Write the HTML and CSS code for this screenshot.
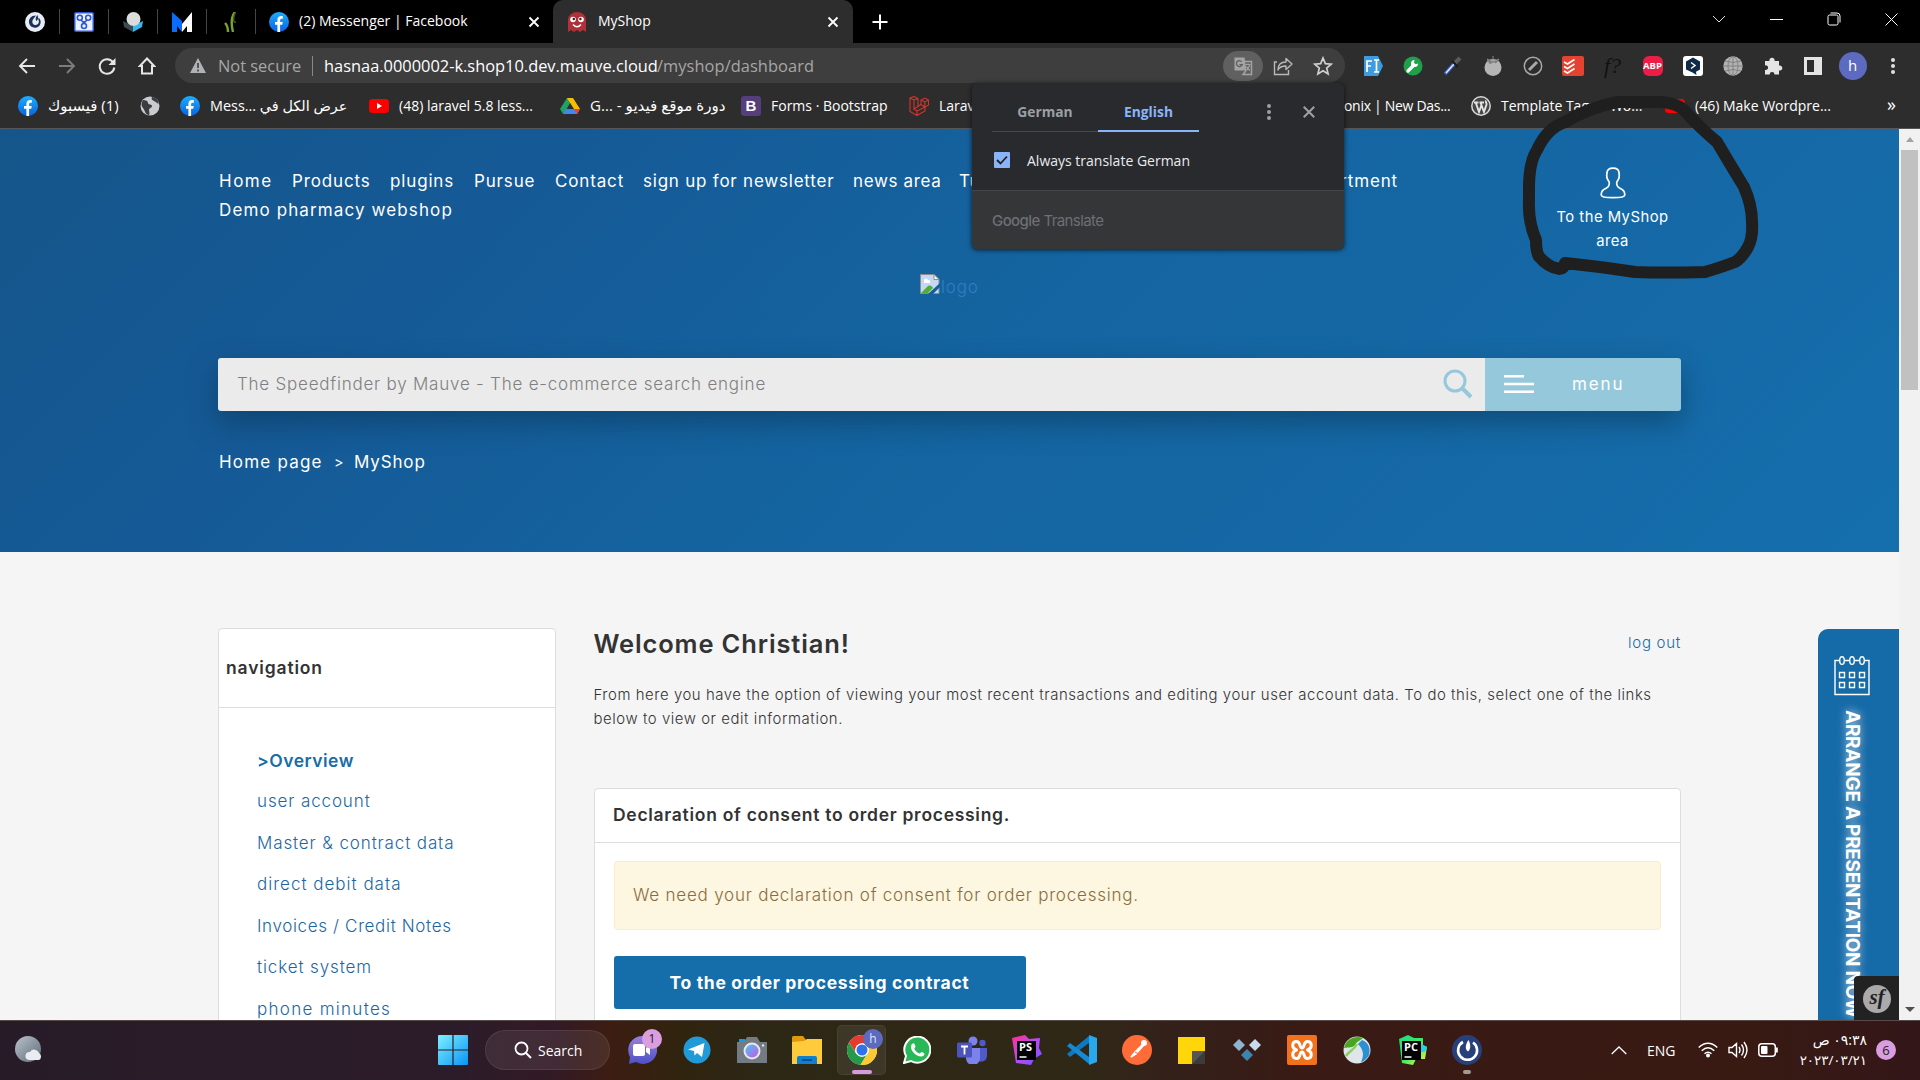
FILE: index.html
```html
<!DOCTYPE html>
<html lang="en">
<head>
<meta charset="utf-8">
<title>MyShop</title>
<link rel="stylesheet" href="styles.css">
</head>
<body>
<svg class="defs" aria-hidden="true">
  <defs>
    <linearGradient id="fbg" x1="0" y1="0" x2="0" y2="1"><stop offset="0" stop-color="#1aafff"/><stop offset="1" stop-color="#0a62e0"/></linearGradient>
    <linearGradient id="wing" x1="0" y1="0" x2="1" y2="1"><stop offset="0" stop-color="#7df0ff"/><stop offset="1" stop-color="#0a94f5"/></linearGradient>
    <linearGradient id="chatg" x1="0" y1="0" x2="0" y2="1"><stop offset="0" stop-color="#9a82d8"/><stop offset="1" stop-color="#4d50c8"/></linearGradient>
    <linearGradient id="psg" x1="0" y1="0" x2="1" y2="1"><stop offset="0" stop-color="#ff318c"/><stop offset=".5" stop-color="#b74af7"/><stop offset="1" stop-color="#6b57ff"/></linearGradient>
    <linearGradient id="pcg" x1="0" y1="0" x2="1" y2="1"><stop offset="0" stop-color="#21d789"/><stop offset=".5" stop-color="#3bea62"/><stop offset="1" stop-color="#fcf84a"/></linearGradient>
    <linearGradient id="lensg" x1="0" y1="0" x2="1" y2="1"><stop offset="0" stop-color="#4fc3f7"/><stop offset="1" stop-color="#c45be0"/></linearGradient>
    <linearGradient id="moong" x1="0" y1="0" x2="1" y2="1"><stop offset="0" stop-color="#b7c2cc"/><stop offset="1" stop-color="#5f6b76"/></linearGradient>
    <symbol id="fb" viewBox="0 0 20 20"><circle cx="10" cy="10" r="10" fill="url(#fbg)"/><path d="M8.4 20v-7.2H6V10h2.4V8c0-2.6 1.5-3.9 3.7-3.9.9 0 1.7.1 1.7.1v2.5h-1.2c-1.100 0-1.500.7-1.500 1.500V10h2.600l-.4 2.800h-2.200V20z" fill="#fff"/></symbol>
    <symbol id="yt" viewBox="0 0 20 20"><rect y="3" width="20" height="14" rx="3.500" fill="#f00"/><path d="M8 7l5 3-5 3z" fill="#fff"/></symbol>
    <symbol id="x" viewBox="0 0 12 12"><path d="M1.500 1.500l9 9m0-9l-9 9" stroke="currentColor" stroke-width="1.800" fill="none"/></symbol>
    <symbol id="dots" viewBox="0 0 6 18"><g fill="currentColor"><circle cx="3" cy="3" r="2"/><circle cx="3" cy="9" r="2"/><circle cx="3" cy="15" r="2"/></g></symbol>
  </defs>
</svg>

<div class="browser">
  <header class="tabstrip">
    <div class="pins">
      <span class="pin"><svg width="20" height="20" viewBox="0 0 20 20"><circle cx="10" cy="10" r="10" fill="#e8ecf4"/><path d="M11 3.500C6 3.500 3.600 7 4 10.800c.5 3.400 3.500 5.200 6.500 4.900 3.700-.3 5.700-3.700 5-7-.3-1.500-1-2.500-2-3.300l-.2 2c.9 1.600.8 3.600-.6 4.800-1.400 1.100-3.700 1-4.800-.5-1.200-1.700-.5-3.800.8-5.200z" fill="#1d3058"/><path d="M12.400 3c.9 2 1 4.500-.8 6-1.700-1.400-.8-4.400.8-6z" fill="#1d3058"/></svg></span>
      <span class="pin"><svg width="20" height="20" viewBox="0 0 20 20"><rect width="20" height="20" rx="2" fill="#2d57d6"/><rect x="1.500" y="1.500" width="17" height="17" fill="#edf2ff"/><g fill="none" stroke="#2d57d6" stroke-width="1.600"><circle cx="5.800" cy="5.800" r="2.500"/><circle cx="14.200" cy="5.800" r="2.500"/><circle cx="10" cy="14" r="2.500"/><path d="M7 8l3 3 3-3M10 9v3"/></g></svg></span>
      <span class="pin"><svg width="20" height="20" viewBox="0 0 20 20"><path d="M0 9l10 5v6L1 15z" fill="#3a4a50"/><path d="M10 14l10-5-1 6-9 5z" fill="#38b6f0"/><circle cx="10.500" cy="7" r="7" fill="#dcdcdc"/></svg></span>
      <span class="pin"><svg width="20" height="20" viewBox="0 0 20 20"><path d="M0 0l10 9v11L5 14v6H0z" fill="#0a6cff"/><path d="M20 0L10 12v8l5-6v6h5z" fill="#fff"/></svg></span>
      <span class="pin"><svg width="20" height="20" viewBox="0 0 20 20"><path d="M14 0c-4 5-4 12-2 20M7 20c0-5-1-7-3-9" stroke="#7da32c" stroke-width="2.400" fill="none"/><path d="M14 1c-2 6-2 10 1 9" stroke="#3f5d1c" stroke-width="1.500" fill="none"/></svg></span>
    </div>
    <div class="tab">
      <svg class="fav" width="20" height="20"><use href="#fb"/></svg><span>(2) Messenger | Facebook</span><svg class="close" width="12" height="12"><use href="#x"/></svg>
    </div>
    <div class="tab active">
      <svg class="fav" width="20" height="20" viewBox="0 0 20 20"><path d="M1 8a9 8 0 0 1 18 0v12l-3-2-3 2-3-2-3 2-3-2-3 2z" fill="#b03238"/><g fill="#fff"><circle cx="6" cy="7.500" r="2.800"/><circle cx="14" cy="7.500" r="2.800"/></g><g fill="#222"><circle cx="6.800" cy="7" r="1.200"/><circle cx="13.400" cy="7" r="1.200"/></g><path d="M6 12.500q4 4.500 8 0" stroke="#fff" stroke-width="1.500" fill="none"/></svg><span>MyShop</span><svg class="close" width="12" height="12"><use href="#x"/></svg>
    </div>
    <svg class="plus" width="16" height="16" viewBox="0 0 16 16"><path d="M8 .5v15M.5 8h15" stroke="#fff" stroke-width="2"/></svg>
    <div class="winctl">
      <svg width="14" height="8" viewBox="0 0 14 8"><path d="M1 1l6 6 6-6" stroke="#ddd" fill="none"/></svg>
      <svg width="13" height="8" viewBox="0 0 13 8"><path d="M0 4.500h13" stroke="#fff"/></svg>
      <svg width="14" height="14" viewBox="0 0 14 14"><rect x="1" y="3" width="10" height="10" rx="1.500" fill="none" stroke="#fff"/><path d="M3.500 1h6.500a3 3 0 0 1 3 3v6.500" fill="none" stroke="#fff"/></svg>
      <svg width="13" height="13" viewBox="0 0 13 13"><path d="M.5.5l12 12m0-12l-12 12" stroke="#fff"/></svg>
    </div>
  </header>

  <div class="toolbar">
    <div class="navbtns">
      <svg width="18" height="18" viewBox="0 0 18 18"><path d="M17 9H2m7-7L2 9l7 7" stroke="#e6e6e6" stroke-width="1.900" fill="none"/></svg>
      <svg width="18" height="18" viewBox="0 0 18 18"><path d="M1 9h15M9 2l7 7-7 7" stroke="#7c7c7c" stroke-width="1.900" fill="none"/></svg>
      <svg width="18" height="18" viewBox="0 0 18 18"><path d="M15 5.200A7.300 7.300 0 1 0 16.300 10.500" stroke="#e6e6e6" stroke-width="2" fill="none"/><path d="M17.500 1v7h-7z" fill="#e6e6e6"/></svg>
      <svg width="18" height="18" viewBox="0 0 18 18"><path d="M9 1.500L1.800 9H4v7.500h10V9h2.200z" stroke="#e6e6e6" stroke-width="2" fill="none"/></svg>
    </div>
    <div class="omnibox">
      <svg width="16" height="15" viewBox="0 0 16 15"><path d="M8 0l8 15H0z" fill="#b0b3b6"/><path d="M8 5v5m0 1.500v2" stroke="#3e3e3e" stroke-width="1.600"/></svg>
      <span class="dim notsecure">Not secure</span><i class="bar"></i><span class="host">hasnaa.0000002-k.shop10.dev.mauve.cloud</span><span class="dim path">/myshop/dashboard</span>
      <div class="omniact">
        <span class="pill"><svg width="20" height="20" viewBox="0 0 20 20"><path d="M1.500 1.500h10l2 13h-12z" fill="#a3a3a3"/><path d="M12 5.500h6.500v13H10l3-4" fill="none" stroke="#a3a3a3" stroke-width="1.500"/><path d="M8.800 5.700a3 3 0 1 0 .4 3H6.500" stroke="#606060" fill="none" stroke-width="1.300"/><path d="M12.500 8.500h5M15 7.500v1m1.700 0c-.4 2.500-1.700 4.500-3.200 6m0-4c.8 2 2 3.200 3.500 4" stroke="#a3a3a3" stroke-width="1.200" fill="none"/></svg></span>
        <svg width="20" height="20" viewBox="0 0 20 20"><path d="M4 6H1.500v12.500h14V14" stroke="#b8b8b8" stroke-width="1.400" fill="none"/><path d="M5 14c0-5 3-8 8-8V2.500L19 8l-6 5.500V10c-4 0-6.500 1-8 4z" stroke="#b8b8b8" stroke-width="1.400" fill="none" stroke-linejoin="round"/></svg>
        <svg width="20" height="20" viewBox="0 0 20 20"><path d="M10 2l2.300 5.600 6 .5-4.600 3.900 1.400 5.900L10 14.800l-5.100 3.100L6.300 12 1.700 8.100l6-.5z" stroke="#d0d0d0" stroke-width="1.700" fill="none"/></svg>
      </div>
    </div>
    <div class="exts">
      <svg width="20" height="20" viewBox="0 0 20 20"><path d="M1 0h14l5 10-5 10H1z" fill="#3f9be0"/><path d="M4 16V5h5M4 10h4M11 4h5m-2.500 0v12M11 16h5" stroke="#fff" stroke-width="1.700" fill="none"/></svg>
      <svg width="20" height="20" viewBox="0 0 20 20"><circle cx="10" cy="10" r="9.500" fill="#1fa14b"/><path d="M5 15l6-6" stroke="#fff" stroke-width="3.200" stroke-linecap="round"/><path d="M15 7.500a3.500 3.500 0 1 1-3.500-3.500l-.5 3 1.500 1.200z" fill="#fff"/></svg>
      <svg width="20" height="20" viewBox="0 0 20 20"><path d="M2 18l9-10" stroke="#3b62d8" stroke-width="3.500"/><path d="M3 17l8-9" stroke="#dfe6ff" stroke-width="1.500"/><path d="M12 7l5-5" stroke="#5a5a5a" stroke-width="4"/><path d="M9 5l6 6" stroke="#1a1a1a" stroke-width="2"/></svg>
      <svg width="20" height="20" viewBox="0 0 20 20"><circle cx="10" cy="11.500" r="8.500" fill="#b5b5b5"/><path d="M10 0v6M4 3l6 3 6-3-3 4-3-1-3 2z" fill="#777" stroke="#8a8a8a"/></svg>
      <svg width="20" height="20" viewBox="0 0 20 20"><circle cx="10" cy="10" r="8.700" fill="none" stroke="#a8a8a8" stroke-width="1.500"/><path d="M6 14l8-8" stroke="#a8a8a8" stroke-width="3"/></svg>
      <svg width="22" height="20" viewBox="0 0 22 20"><rect width="22" height="20" rx="2" fill="#e44332"/><path d="M2 6l3.500 2 7-4.500M2 10.500l3.500 2 7-4.500M2 15l3.500 2 7-4.500" stroke="#fff" stroke-width="1.600" fill="none"/></svg>
      <span class="fq">f?</span>
      <span class="abp">ABP</span>
      <svg width="20" height="20" viewBox="0 0 20 20"><rect width="20" height="20" rx="3" fill="#fff"/><path d="M10 1.500l7 4v8l-4 2.300.5 3.200-4-2.500L3 13.500v-8z" fill="#0f2b46"/><path d="M8 6.500l4 3-4 3" stroke="#fff" stroke-width="1.500" fill="none"/></svg>
      <svg width="20" height="20" viewBox="0 0 20 20"><circle cx="10" cy="10" r="9.700" fill="#b2b2b2"/><path d="M10 0v20M0 10h20M2 5q8 3 16 0M2 15q8-3 16 0" stroke="#777" stroke-width=".8" fill="none"/><ellipse cx="10" cy="10" rx="5" ry="9.500" stroke="#777" stroke-width=".8" fill="none"/></svg>
      <svg width="20" height="20" viewBox="0 0 20 20"><path d="M2 5h4.500a2.600 2.600 0 1 1 5 0H16v4.500a2.600 2.600 0 1 1 0 5V18.500h-4.500a2.400 2.400 0 1 0-4.800 0H2V14a2.400 2.400 0 1 0 0-4.600z" fill="#e4e4e4"/></svg>
      <svg width="18" height="18" viewBox="0 0 18 18"><path d="M0 0h18v18H0zM3 3v12h7V3z" fill="#e4e4e4" fill-rule="evenodd"/></svg>
      <span class="avatar">h</span>
      <svg class="kebab" width="6" height="18"><use href="#dots"/></svg>
    </div>
  </div>

  <nav class="bookmarks">
    <a class="bk-fb"><svg width="20" height="20"><use href="#fb"/></svg><span class="ar" dir="rtl">(1) فيسبوك</span></a>
    <a class="bk-globe"><svg width="20" height="20" viewBox="0 0 20 20"><circle cx="10" cy="10" r="9.500" fill="#c9cccf"/><path d="M3 4c3 0 5 1 5 3s4 1 4 3-3 2-3 4 1 3 0 5c-4 0-4-5-6-7s-2-5 0-8zM12 1c-1 2 0 3 2 4s3 2 4.500 3C19 5 16 1 12 1z" fill="#3a3d40"/></svg></a>
    <a class="bk-mess"><svg width="20" height="20"><use href="#fb"/></svg><span class="ar2">Mess... عرض الكل في</span></a>
    <a class="bk-laravel"><svg width="20" height="20"><use href="#yt"/></svg><span>(48) laravel 5.8 less...</span></a>
    <a class="bk-drive"><svg width="20" height="20" viewBox="0 0 20 20"><path d="M7 2h6L6 14l-3 4-3-5z" fill="#1ea362"/><path d="M7 2h6l7 11h-6z" fill="#fbbc04"/><path d="M6 13h14l-3 5H3z" fill="#4285f4"/><path d="M14 13h6l-3 5z" fill="#ea4335"/></svg><span class="ar3">G... - دورة موقع فيديو</span></a>
    <a class="bk-boot"><span class="bs">B</span><span>Forms · Bootstrap</span></a>
    <a class="bk-lara"><svg width="20" height="20" viewBox="0 0 20 20"><path d="M1 2l4-1.500L9 2.500v8l3-2V4l4-2 3.500 2v5l-3.500 2v4l-8 4.500-7-4zM1 2l4 2v9l4-2.500M5 4l4-1.500M12 4l3.800 2L19.500 4M15.800 6v5L12 8.500M8 19.500V15l8-4M5 13l3 2" stroke="#d8342b" fill="none" stroke-width="1.100"/></svg><span>Laravel</span></a>
    <a class="bk-onix"><span>onix | New Das...</span></a>
    <a class="bk-wp"><svg width="20" height="20" viewBox="0 0 20 20"><circle cx="10" cy="10" r="9.200" fill="#464646" stroke="#d8d8d8" stroke-width="1.500"/><path d="M3 6.500h4.500M8.500 6.500H13M4.700 6.500L8 16l2.300-6.500M9.500 6.500L13 16l2.500-7.500c.5-2-1.500-2.500-.5-4" stroke="#e4e4e4" stroke-width="1.900" fill="none"/></svg><span>Template Tags – Wo...</span></a>
    <a class="bk-yt2"><svg width="20" height="20"><use href="#yt"/></svg><span>(46) Make Wordpre...</span></a>
    <span class="more">»</span>
  </nav>

  <div class="viewport">
    <div class="page">
      <section class="hero">
        <div class="hero-top">
          <nav class="mainnav">
            <a class="w-home">Home</a><a class="w-prod">Products</a><a class="w-plug">plugins</a><a class="w-purs">Pursue</a><a class="w-cont">Contact</a><a class="w-sign">sign up for newsletter</a><a class="w-news">news area</a><a class="w-tut">Tutorials</a><a class="w-dep">Department</a><a class="w-demo">Demo pharmacy webshop</a>
          </nav>
          <a class="account">
            <svg width="26" height="32" viewBox="0 0 26 32"><path d="M13 1.200c-4 0-6 1.600-6 4.800-.8 3 .2 6.500 2.200 9 .5 3.200-.2 4.600-2.700 6C3 22.700 1.200 24 1.200 28c0 1.800 4 2.700 11.800 2.700s11.800-.9 11.800-2.700c0-4-1.800-5.300-5.300-7-2.500-1.400-3.200-2.800-2.700-6 2-2.500 3-6 2.200-9 0-3.200-2-4.800-6-4.800z" fill="none" stroke="#fff" stroke-width="1.700"/></svg>
            <span>To the MyShop<br>area</span>
          </a>
        </div>
        <div class="logo"><svg width="20" height="20" viewBox="0 0 20 20"><path d="M.5.500h13.500l5 5v14H.5z" fill="#c4d8f5" stroke="#8d8d8d"/><path d="M14 .500v5h5z" fill="#fff" stroke="#8d8d8d"/><path d="M4 7a2 2 0 0 1 4-1 2 2 0 0 1 2 3H4z" fill="#fff"/><path d="M1 19l7-7c2-1 4 0 5 2l-5 5z" fill="#4fae33"/><path d="M8 20L20 9v4l-7 7z" fill="#155c98"/></svg><span>logo</span></div>
        <div class="search">
          <div class="field"><span>The Speedfinder by Mauve - The e-commerce search engine</span>
            <svg width="30" height="30" viewBox="0 0 30 30"><circle cx="12" cy="12" r="10" fill="none" stroke="#96c8db" stroke-width="3"/><path d="M19 19l9 9" stroke="#96c8db" stroke-width="4"/></svg></div>
          <div class="menu"><svg width="30" height="18" viewBox="0 0 30 18"><path d="M0 1.200h20M0 9h30M0 16.700h30" stroke="#fff" stroke-width="2.400"/></svg><span>menu</span></div>
        </div>
        <div class="crumbs"><span class="c1">Home page</span><span class="c2">&gt;</span><span class="c3">MyShop</span></div>
      </section>
      <main class="content">
        <aside class="sidenav">
          <h3>navigation</h3>
          <ul>
            <li class="current">&gt;Overview</li><li>user account</li><li>Master &amp; contract data</li><li class="n-debit">direct debit data</li><li class="n-inv">Invoices / Credit Notes</li><li>ticket system</li><li class="n-phone">phone minutes</li>
          </ul>
        </aside>
        <div class="main">
          <div class="welcome"><h1>Welcome Christian!</h1><a>log out</a></div>
          <p class="intro">From here you have the option of viewing your most recent transactions and editing your user account data. To do this, select one of the links<br>below to view or edit information.</p>
          <section class="panel">
            <h3>Declaration of consent to order processing.</h3>
            <div class="panel-body">
              <div class="alert">We need your declaration of consent for order processing.</div>
              <a class="btn">To the order processing contract</a>
            </div>
          </section>
        </div>
      </main>
      <div class="sidetab">
        <svg width="36" height="40" viewBox="0 0 36 40"><g fill="none" stroke="#fff" stroke-width="1.400"><path d="M5.500 4.500H1v34h34v-34h-4.500M10.500 4.500h5M20.500 4.500h5"/><ellipse cx="8" cy="4.600" rx="2.300" ry="3.800"/><ellipse cx="18" cy="4.600" rx="2.300" ry="3.800"/><ellipse cx="28" cy="4.600" rx="2.300" ry="3.800"/><path d="M5.500 16.500h5v5h-5zM15.500 16.500h5v5h-5zM25.500 16.500h5v5h-5zM5.500 26.500h5v5h-5zM15.500 26.500h5v5h-5zM25.500 26.500h5v5h-5z"/></g></svg>
        <span>ARRANGE A PRESENTATION NOW</span>
      </div>
      <div class="sf"><span>sf</span></div>
    </div>
    <div class="scrollbar"><i class="up"></i><i class="thumb"></i><i class="down"></i></div>
  </div>

  <footer class="taskbar">
    <svg class="weather" width="28" height="28" viewBox="0 0 28 28"><circle cx="13" cy="13" r="13" fill="url(#moong)"/><path d="M14 24a4 4 0 0 1 1-8 5 5 0 0 1 9 1 4 4 0 0 1 0 7z" fill="#e9edf0"/></svg>
    <svg class="win" width="30" height="30" viewBox="0 0 30 30"><path d="M0 1a1 1 0 0 1 1-1h13.400v14.400H0zM15.600 0H29a1 1 0 0 1 1 1v13.400H15.600zM0 15.600h14.400V30H1a1 1 0 0 1-1-1zM15.600 15.600H30V29a1 1 0 0 1-1 1H15.600z" fill="url(#wing)"/></svg>
    <div class="tsearch"><svg width="18" height="18" viewBox="0 0 18 18"><circle cx="7.500" cy="7.500" r="6" fill="none" stroke="#fff" stroke-width="1.800"/><path d="M12 12l5 5" stroke="#fff" stroke-width="1.900"/></svg><span>Search</span></div>
    <div class="apps">
      <span class="app"><svg width="30" height="30" viewBox="0 0 30 30"><path d="M15 1a14 14 0 1 1-6 26l-7 2 1-7A14 14 0 0 1 15 1z" fill="url(#chatg)"/><rect x="6" y="9" width="12" height="12" rx="2" fill="#fff"/><path d="M19 13l4-3v10l-4-3z" fill="#fff"/></svg><b class="badge pink">1</b></span>
      <span class="app"><svg width="28" height="28" viewBox="0 0 28 28"><circle cx="14" cy="14" r="13.500" fill="#219bd8"/><path d="M5 13.500L21.500 7 19 21l-5-4-2.500 2.500-.5-4.500z" fill="#fff"/></svg></span>
      <span class="app"><svg width="30" height="26" viewBox="0 0 30 26"><rect x="2" y="2" width="6" height="4" fill="#0aa0e8"/><path d="M0 5h7l3-5h10l3 5h7v21H0z" fill="#747b82"/><circle cx="15" cy="14" r="8.500" fill="#e6e9ec"/><circle cx="15" cy="14" r="6.500" fill="url(#lensg)"/><circle cx="26" cy="8.500" r="1.200" fill="#dfe4e8"/></svg></span>
      <span class="app"><svg width="30" height="28" viewBox="0 0 30 28"><path d="M0 1.500A1.500 1.500 0 0 1 1.500 0H11l3 4h16v10H0z" fill="#e09a09"/><path d="M0 6l12-1 3-2h15v25H0z" fill="#ffcb3d"/><path d="M5 28v-6q0-2 2-2h16q2 0 2 2v6z" fill="#0f7fd0"/><path d="M10 24h10" stroke="#063e78" stroke-width="1.500"/></svg></span>
      <span class="app running"><svg width="30" height="30" viewBox="0 0 30 30"><circle cx="15" cy="15" r="15" fill="#fff"/><path d="M2 7.500A15 15 0 0 1 28.500 8.500H15a7 7 0 0 0-6.500 9z" fill="#e33b2e"/><path d="M2 7.500A15 15 0 0 0 13.500 30l7-11.500a7 7 0 0 1-11.700-.5z" fill="#269a48"/><path d="M28.500 8.500A15 15 0 0 1 13.500 30l7-11.500A7 7 0 0 0 18 8.500z" fill="#fcc934"/><circle cx="15" cy="15" r="6.800" fill="#fff"/><circle cx="15" cy="15" r="5.500" fill="#2f73e8"/></svg><b class="badge blue">h</b></span>
      <span class="app"><svg width="28" height="28" viewBox="0 0 28 28"><path d="M1 27l2-7A13 13 0 1 1 8 25z" fill="#29b858" stroke="#fff" stroke-width="2"/><path d="M9 8c1-1 2-1 2.500 0l1 2.500c0 1-1.500 1.500-1 2.500 1 2 2.500 3.500 5 4.500 1 0 1.500-2 2.500-1.500l2.500 1.500c0 2-1.500 3-3.500 3-5-.5-10-5-10-9.500 0-1 .5-2.500 1-3z" fill="#fff"/></svg></span>
      <span class="app"><svg width="30" height="28" viewBox="0 0 30 28"><circle cx="16" cy="5" r="4.500" fill="#7b83eb"/><circle cx="25.500" cy="7" r="3.200" fill="#5059c9"/><path d="M19 12h11v8a6 6 0 0 1-9 5z" fill="#5059c9"/><path d="M9 12h14v9a7 7 0 0 1-14 2z" fill="#7b83eb"/><rect y="6.500" width="15" height="15" rx="1.500" fill="#4b53bc"/><path d="M4 10.500h7M7.500 10.500v8" stroke="#fff" stroke-width="1.800"/></svg></span>
      <span class="app"><svg width="30" height="30" viewBox="0 0 30 30"><path d="M0 3l13-3 4 4 11-1-1 10 3 6-8 5-3 6-15-2z" fill="url(#psg)"/><rect x="5" y="6" width="19" height="19" fill="#000"/><text x="7" y="16" class="ide">PS</text><path d="M7.500 22h7" stroke="#fff" stroke-width="1.500"/></svg></span>
      <span class="app"><svg width="30" height="30" viewBox="0 0 30 30"><path d="M22 1L0 19l3 3L22 8z" fill="#0e7ac4"/><path d="M22 29L0 11l3-3 19 14z" fill="#1489d4"/><path d="M22 0l8 3v24l-8 3z" fill="#29a8ee"/></svg></span>
      <span class="app"><svg width="30" height="30" viewBox="0 0 30 30"><circle cx="15" cy="15" r="15" fill="#ff6c37"/><circle cx="22" cy="8" r="3" fill="#fff"/><path d="M20 10l-7 7-4 5 5-3 7-8z" fill="#fff" stroke="#fff" stroke-width="1.500"/><path d="M13 17l4 2" stroke="#ff6c37"/></svg></span>
      <span class="app"><svg width="27" height="27" viewBox="0 0 27 27"><path d="M0 0h27v14L14 27H0z" fill="#ffd60a"/><path d="M14 14h13v13H14z" fill="#3b3b3b"/><path d="M14 27V14h13z" fill="#555"/></svg></span>
      <span class="app"><svg width="30" height="24" viewBox="0 0 30 24"><path d="M7 1l6 6-6 6-6-6z" fill="#8fb4cf"/><path d="M23 1l6 6-6 6-6-6z" fill="#c7dbea"/><path d="M15 11l6 6-6 6-6-6z" fill="#3e84b0"/></svg></span>
      <span class="app"><svg width="30" height="30" viewBox="0 0 30 30"><rect width="30" height="30" rx="2" fill="#f2711c"/><path d="M9.500 15C4 13 5 6.500 9.500 6.500S12 13 15 13s1-6.500 5.500-6.500S26 13 20.500 15C26 17 25 23.500 20.500 23.500S18 17 15 17s-1 6.500-5.500 6.500S4 17 9.500 15z" stroke="#fff" stroke-width="3" stroke-linejoin="round" fill="none"/></svg></span>
      <span class="app"><svg width="28" height="28" viewBox="0 0 28 28"><circle cx="14" cy="14" r="13.500" fill="#dfe6ea"/><path d="M1 12C3 3 12-1 20 2c-3 3-6 3-8 7-2 3-6 2-11 3z" fill="#4aa521"/><path d="M19 4c6 2 9 8 7 15-2 4-6 7-8 7 3-6 3-12-3-18z" fill="#2b8fd1"/><path d="M3 20c3-5 8-6 11-12" stroke="#8ccf5e" stroke-width="2.500" fill="none"/></svg></span>
      <span class="app"><svg width="30" height="30" viewBox="0 0 30 30"><path d="M2 4l9-4 6 3 9 0 0 7 4 2-2 12-9 0-3 6-11-2z" fill="url(#pcg)"/><path d="M24 9l6 3-2 5h-6z" fill="#1fd4f0"/><rect x="5" y="6" width="19" height="19" fill="#000"/><text x="7" y="16" class="ide">PC</text><path d="M7.500 22h7" stroke="#fff" stroke-width="1.500"/></svg></span>
      <span class="app dot"><svg width="30" height="30" viewBox="0 0 30 30"><circle cx="15" cy="15" r="15" fill="#27407c"/><path d="M11 7A9.500 9.500 0 1 0 21 7.500" fill="none" stroke="#fff" stroke-width="2.600"/><path d="M16.500 5c2.200 4 2.600 9-.5 11.500-3.600-2-2.300-8 .5-11.500z" fill="#fff"/></svg></span>
    </div>
    <div class="tray">
      <svg class="t-up" width="16" height="9" viewBox="0 0 16 9"><path d="M.7 8L8 1l7.300 7" stroke="#fff" stroke-width="1.300" fill="none"/></svg>
      <span class="lang">ENG</span>
      <svg class="t-wifi" width="20" height="16" viewBox="0 0 20 16"><g fill="none" stroke="#fff" stroke-width="1.500"><path d="M.7 5.500q9.300-8.500 18.600 0M3.700 8.700q6.300-5.800 12.600 0M6.500 11.700q3.500-3 7 0"/></g><circle cx="10" cy="13.500" r="2" fill="#fff"/></svg>
      <svg class="t-vol" width="20" height="18" viewBox="0 0 20 18"><path d="M1 6.500h3l4.500-4v13L4 11.500H1zM11 6q2 3 0 6M13.500 3.500q4 5.500 0 11M16 1q6 8 0 16" fill="none" stroke="#fff" stroke-width="1.400"/></svg>
      <svg class="t-bat" width="20" height="14" viewBox="0 0 20 14"><rect x=".8" y=".8" width="16.500" height="12.400" rx="3" fill="none" stroke="#fff" stroke-width="1.500"/><rect x="3" y="3" width="6.500" height="8" rx="1" fill="#fff"/><path d="M18.800 4.500v5" stroke="#fff" stroke-width="2"/></svg>
      <div class="clock" dir="rtl"><span>٠٩:٣٨ ص</span><span class="date" dir="ltr">٢٠٢٣/٠٣/٢١</span></div>
      <b class="count">6</b>
    </div>
  </footer>
</div>

<div class="translate">
  <div class="tr-top">
    <span class="tr-tab de">German</span><span class="tr-tab en">English</span>
    <svg class="tr-dots" width="6" height="18"><use href="#dots"/></svg>
    <svg class="tr-x" width="14" height="14"><use href="#x"/></svg>
  </div>
  <div class="tr-opt"><span class="check"><svg width="12" height="10" viewBox="0 0 12 10"><path d="M1 5l3.500 3.500L11 1.500" stroke="#202124" stroke-width="1.800" fill="none"/></svg></span><span>Always translate German</span></div>
  <div class="tr-foot"><b>Google</b> Translate</div>
</div>

<svg class="doodle" width="260" height="200" viewBox="1510 90 260 200"><path d="M1558 268.500 Q1548 267 1538.500 256 Q1536 250 1536 240 Q1528 222 1529 200 V188 Q1529 162 1537 150 Q1547 128 1565 122 Q1590 107 1618 102 H1655 Q1672 101 1683 109 Q1700 128 1717 142 Q1730 164 1744 187 Q1752 205 1752 222 Q1753 238 1748 247 Q1742 258 1735 262 Q1722 267 1705 272 Q1664 273 1635 272 Q1595 266 1565 263 Q1564 269 1559 269" fill="none" stroke="#1f1f1f" stroke-width="12" stroke-linejoin="round" stroke-linecap="round"/></svg>
</body>
</html>
```
FILE: styles.css
```css
* { box-sizing: border-box; }
body { margin: 0; width: 1920px; height: 1080px; overflow: hidden; position: relative; font: 14px "Open Sans", "DejaVu Sans", sans-serif; color: #fff; }
h1, h3, p, ul { margin: 0; padding: 0; list-style: none; }
svg { flex: none; display: block; }
.defs { position: absolute; width: 0; height: 0; }
.browser { display: flex; flex-direction: column; height: 1080px; }

/* tab strip */
.tabstrip { height: 43px; background: #000; display: flex; align-items: center; flex: none; }
.pins { display: flex; padding-left: 11px; width: 256px; }
.pin { width: 49px; height: 25px; display: flex; align-items: center; justify-content: center; border-right: 1px solid #454545; }
.tab { display: flex; align-items: center; height: 43px; width: 297px; padding: 0 13px; white-space: nowrap; }
.tab span { line-height: 20px; padding-bottom: 1px; }
.tab .fav { margin-right: 10px; }
.tab .close { margin-left: auto; }
.tab.active { width: 300px; background: #2d2d2d; border-radius: 10px 10px 0 0; padding: 0 14px; }
.tab.active .fav { margin-right: 11px; }
.plus { margin-left: 19px; }
.winctl { margin-left: auto; display: flex; width: 230px; height: 38px; align-items: center; justify-content: space-around; align-self: flex-start; }

/* toolbar */
.toolbar { height: 45px; background: #2d2d2d; display: flex; align-items: center; flex: none; }
.navbtns { width: 175px; padding-left: 18px; display: flex; gap: 22px; }
.omnibox { width: 1170px; height: 35px; border-radius: 18px; background: #3e3e3e; display: flex; align-items: center; padding-left: 15px; font-size: 16.400px; white-space: nowrap; }
.dim { color: #a6a6a6; }
.notsecure { margin-left: 12px; width: 94px; }
.bar { width: 1px; height: 20px; background: #888; margin-right: 11px; }
.host { width: 333px; }
.path { width: 157px; letter-spacing: .07px; }
.omniact { margin-left: auto; display: flex; align-items: center; gap: 20px; padding-right: 12px; }
.pill { width: 40px; height: 30px; border-radius: 15px; background: #606060; display: flex; align-items: center; justify-content: center; margin-right: -10px; }
.exts { display: grid; grid-template-columns: repeat(14, 40px); justify-items: center; align-items: center; margin-left: 7.500px; }
.fq { font: italic 22px/24px "Liberation Serif", serif; color: #111; }
.abp { width: 20px; height: 20px; border-radius: 6px; background: #ed1e45; font: 700 9.500px/20px "Open Sans", sans-serif; text-align: center; }
.avatar { width: 28px; height: 28px; border-radius: 50%; background: #5c6bc0; text-align: center; font-size: 15px; line-height: 27px; }
.kebab { color: #e0e0e0; }

/* bookmarks */
.bookmarks { height: 41px; background: #2d2d2d; border-bottom: 1px solid #55565a; display: flex; padding: 0 0 4px 18px; flex: none; align-items: center; font-size: 14px; }
.bookmarks a { display: flex; align-items: center; gap: 10px; white-space: nowrap; flex: none; }
.bookmarks a span { margin-top: -2px; }
.ar { font-size: 14.900px; }
.ar3 { font-size: 15.100px; }
.ar2 { font-size: 14.400px; }
.bk-fb { width: 122px; } .bk-globe { width: 40px; } .bk-mess { width: 189px; } .bk-laravel { width: 191px; }
.bk-drive { width: 181px; } .bk-boot { width: 168px; } .bk-lara { width: 435px; } .bk-onix { width: 127px; letter-spacing: -.3px; } .bk-wp { width: 194px; }
.bookmarks .bs { margin-top: 0; width: 20px; height: 20px; border-radius: 3px; background: #563d7c; font: 700 15px/20px "Liberation Sans", sans-serif; text-align: center; }
.more { margin: 0 24px 4px auto; font-size: 18px; line-height: 18px; }

/* page */
.viewport { flex: 1; display: flex; min-height: 0; }
.page { width: 1899px; position: relative; overflow: hidden; background: #f5f5f5; font-family: "Inter", sans-serif; }
.scrollbar { width: 21px; background: #f1f1f1; display: flex; flex-direction: column; align-items: center; padding: 8px 2px; }
.up { border: 4.500px solid transparent; border-bottom: 5px solid #a3a3a3; border-top: 0; margin-bottom: 8px; }
.thumb { width: 17px; height: 240px; background: #c1c1c1; }
.down { margin-top: auto; border: 5px solid transparent; border-top: 5px solid #505050; border-bottom: 0; }

.hero { height: 423px; background: linear-gradient(135deg, #15568a 0%, #155a97 25%, #1464a0 50%, #1569a6 78%, #156fad 100%); padding: 37.500px 0 0 218px; font-size: 17px; letter-spacing: .850px; }
.hero-top { display: flex; height: 107.500px; }
.mainnav { width: 1324px; padding: 0 119px 0 1px; display: flex; flex-wrap: wrap; align-content: flex-start; line-height: 29.500px; white-space: nowrap; }
.w-home { width: 73px; letter-spacing: 1.500px; } .w-prod { width: 98px; } .w-plug { width: 84px; } .w-purs { width: 81px; } .w-cont { width: 88px; }
.w-sign { width: 210px; letter-spacing: .780px; } .w-news { width: 106px; letter-spacing: .650px; } .w-tut { width: 200px; } .w-dep { width: 239px; text-align: right; } .w-demo { letter-spacing: 1.120px; }
.account { width: 140px; display: flex; flex-direction: column; align-items: center; text-align: center; font-size: 14.800px; line-height: 24px; letter-spacing: .5px; gap: 6px; padding-left: 1px; }
.logo { width: 1463px; display: flex; padding-left: 702px; height: 24px; color: #2f7fc2; font-weight: 300; }
.logo span { line-height: 27px; margin-left: 1px; }
.search { width: 1463px; height: 53px; margin-top: 60px; display: flex; border-radius: 3px; box-shadow: 0 12px 28px rgba(10, 50, 80, .5); }
.field { width: 1267px; background: #ebebeb; border-radius: 3px 0 0 3px; display: flex; align-items: center; justify-content: space-between; padding: 0 12px 2px 19px; color: #808080; font-weight: 300; letter-spacing: .774px; white-space: nowrap; }
.menu { width: 196px; background: #96c8db; border-radius: 0 3px 3px 0; display: flex; align-items: center; padding: 0 0 2px 19px; gap: 38px; letter-spacing: 1.900px; }
.crumbs { display: flex; margin: 41px 0 0 1px; line-height: 20px; }
.c1 { width: 115px; letter-spacing: 1.200px; } .c2 { width: 20px; font-size: 14.500px; }

.content { display: flex; gap: 37.500px; padding: 76px 0 0 218px; color: #333; }
.sidenav { width: 338px; height: 440px; background: #fff; border: 1px solid #ddd; border-radius: 4px; }
.sidenav h3 { height: 79px; border-bottom: 1px solid #ddd; padding-left: 7px; font-size: 17.500px; font-weight: 600; line-height: 78px; letter-spacing: .850px; }
.sidenav ul { padding: 31.500px 0 0 38px; font-size: 17px; font-weight: 300; color: #1b67a2; line-height: 41.600px; letter-spacing: .880px; }
.sidenav .current { font-weight: 600; font-size: 17.500px; color: #156da9; letter-spacing: .500px; }
.sidenav .n-debit { letter-spacing: 1px; } .sidenav .n-inv { letter-spacing: .650px; } .sidenav .n-phone { letter-spacing: 1.290px; }
.main { width: 1087.500px; }
.welcome { display: flex; justify-content: space-between; line-height: 29px; }
.welcome h1 { font-size: 25.500px; font-weight: 600; letter-spacing: .850px; line-height: 31px; height: 29px; }
.welcome a { font-size: 15px; font-weight: 300; letter-spacing: .730px; color: #156da9; }
.intro { margin-top: 26px; font-size: 14.900px; font-weight: 300; line-height: 24px; letter-spacing: .571px; white-space: nowrap; }
.panel { margin-top: 57px; background: #fff; border: 1px solid #ddd; border-radius: 4px; height: 300px; }
.panel h3 { height: 54px; border-bottom: 1px solid #ddd; padding-left: 18.500px; font-size: 17.500px; font-weight: 600; line-height: 52px; letter-spacing: .710px; }
.panel-body { padding: 18px 19px; }
.alert { height: 69px; background: #fdf6e0; border: 1px solid #faebcc; border-radius: 4px; padding-left: 18.500px; line-height: 67px; font-size: 17px; font-weight: 300; letter-spacing: .780px; color: #8a6d3b; }
.btn { display: block; margin-top: 26px; width: 412px; height: 53px; border-radius: 3px; background: #156da9; color: #fff; font-size: 17.500px; font-weight: 700; line-height: 54px; text-align: center; letter-spacing: .650px; }
.sidetab { position: absolute; left: 1818px; top: 500px; width: 81px; height: 400px; background: #156aa8; border-radius: 10px 0 0 0; padding: 27px 0 0 16px; }
.sidetab span { display: block; writing-mode: vertical-rl; margin: 14px 0 0 7px; line-height: 22px; font-size: 19px; font-weight: 700; letter-spacing: -.270px; white-space: nowrap; text-shadow: 0 0 10px rgba(255, 255, 255, .8); }
.sf { position: absolute; right: 0; bottom: 0; width: 45px; height: 44px; background: #222; border-radius: 4px 0 0 0; padding: 9px 0 0 9px; }
.sf span { display: block; width: 28px; height: 28px; border-radius: 50%; background: #aaa; color: #222; font: italic 700 21px/25px "Liberation Serif", serif; text-align: center; }

/* taskbar */
.taskbar { height: 60px; flex: none; border-top: 1px solid #564a48; background: linear-gradient(90deg, #281b28 0, #2c1c2a 460px, #331a24 560px, #3d1d12 610px, #30240f 680px, #2d2716 760px, #302817 1080px, #34201a 1180px, #391a14 1300px, #381a13 1750px, #331618 1920px); display: flex; align-items: center; padding-bottom: 1px; }
.weather { margin-left: 15px; }
.win { margin-left: 395px; }
.tsearch { margin-left: 17px; width: 125px; height: 40px; border-radius: 20px; border: 1px solid rgba(255, 255, 255, .08); background: rgba(255, 255, 255, .08); display: flex; align-items: center; gap: 6px; padding-left: 28px; }
.apps { display: flex; margin-left: 4px; }
.app { width: 55px; height: 50px; display: flex; align-items: center; justify-content: center; position: relative; }
.running::before { content: ""; position: absolute; inset: 0 3px; border-radius: 5px; background: rgba(255, 255, 255, .08); border: 1px solid rgba(255, 255, 255, .05); }
.running svg { position: relative; }
.running::after { content: ""; position: absolute; bottom: 1px; left: 18px; width: 20px; height: 4px; border-radius: 2px; background: #d59bdc; }
.dot::after { content: ""; position: absolute; bottom: 1px; left: 24px; width: 8px; height: 4px; border-radius: 2px; background: #a39a98; }
.badge { position: absolute; width: 20px; height: 20px; border-radius: 50%; left: 28px; top: 4px; font-size: 12px; line-height: 20px; font-weight: 400; text-align: center; }
.pink { background: #da9de0; color: #222; }
.blue { background: #5c6bc0; color: #dfe3ff; left: 29px; }
.ide { font: 700 11px "Open Sans", sans-serif; fill: #fff; }
.tray { margin-left: auto; display: flex; align-items: center; }
.lang { margin-left: 20px; width: 31px; }
.t-wifi { margin-left: 20px; } .t-vol { margin-left: 10px; } .t-bat { margin-left: 10px; }
.clock { width: 89px; display: flex; flex-direction: column; line-height: 20px; align-items: flex-start; font-size: 14px; white-space: nowrap; }
.date { font-size: 13.400px; }
.count { width: 20px; height: 20px; border-radius: 50%; background: #da9de0; color: #222; font-size: 13px; line-height: 20px; text-align: center; font-weight: 400; margin: 0 24px 0 9px; }

/* translate bubble */
.translate { position: absolute; left: 972px; top: 83px; width: 372px; height: 166px; background: #292a2d; border-radius: 5px; box-shadow: 0 1px 5px rgba(0, 0, 0, .7); overflow: hidden; }
.tr-top { display: flex; height: 49px; padding-left: 20px; font-weight: 700; color: #9aa0a6; align-items: center; }
.tr-tab { height: 49px; line-height: 57px; text-align: center; font-size: 13.800px; }
.de { width: 106px; border-bottom: 1px solid #46474a; }
.en { width: 101px; border-bottom: 2px solid #8ab4f8; color: #8ab4f8; }
.tr-dots { margin: 9px 0 0 67px; }
.tr-x { margin: 9px 0 0 30px; }
.tr-opt { height: 59px; display: flex; align-items: center; padding: 0 0 2px 22px; gap: 17px; color: #e8eaed; border-bottom: 1px solid #434447; }
.check { width: 16px; height: 16px; background: #8ab4f8; border-radius: 1px; display: flex; align-items: center; justify-content: center; }
.tr-foot { height: 59px; background: #353638; color: #6c6f73; font: 15px/59px "Inter", sans-serif; letter-spacing: -.580px; padding-left: 20px; }
.tr-foot b { font-weight: 500; }

.doodle { position: absolute; left: 1510px; top: 90px; }
```
